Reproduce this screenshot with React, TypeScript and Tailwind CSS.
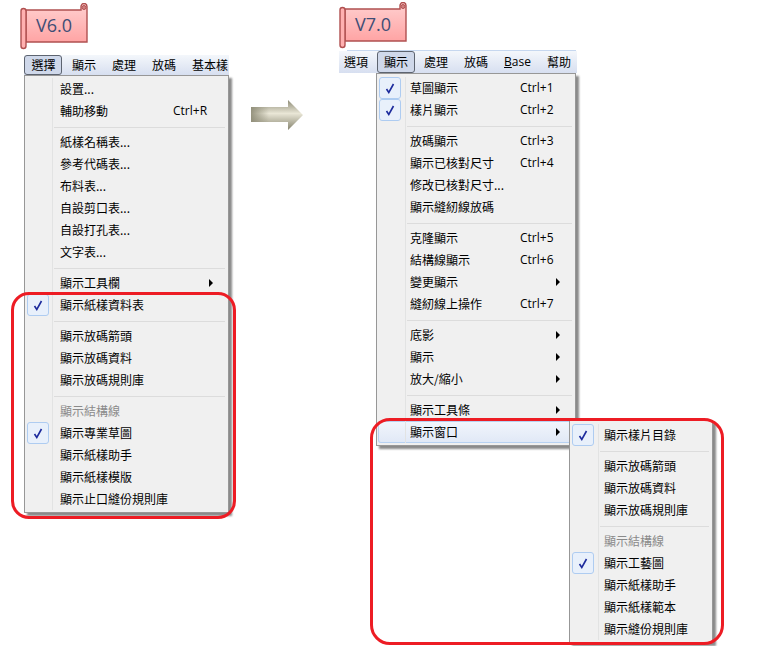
import React from 'react';

type Row = {
  label?: string;
  shortcut?: string;
  checked?: boolean;
  arrow?: boolean;
  disabled?: boolean;
  active?: boolean;
  sep?: boolean;
};

const font = { fontFamily: '"Noto Sans CJK TC", "Noto Sans", sans-serif' };

const v6Rows: Row[] = [
  { label: '設置...' },
  { label: '輔助移動', shortcut: 'Ctrl+R' },
  { sep: true },
  { label: '紙樣名稱表...' },
  { label: '參考代碼表...' },
  { label: '布料表...' },
  { label: '自設剪口表...' },
  { label: '自設打孔表...' },
  { label: '文字表...' },
  { sep: true },
  { label: '顯示工具欄', arrow: true },
  { label: '顯示紙樣資料表', checked: true },
  { sep: true },
  { label: '顯示放碼箭頭' },
  { label: '顯示放碼資料' },
  { label: '顯示放碼規則庫' },
  { sep: true },
  { label: '顯示結構線', disabled: true },
  { label: '顯示專業草圖', checked: true },
  { label: '顯示紙樣助手' },
  { label: '顯示紙樣模版' },
  { label: '顯示止口縫份規則庫' },
];

const v7Rows: Row[] = [
  { label: '草圖顯示', shortcut: 'Ctrl+1', checked: true },
  { label: '樣片顯示', shortcut: 'Ctrl+2', checked: true },
  { sep: true },
  { label: '放碼顯示', shortcut: 'Ctrl+3' },
  { label: '顯示已核對尺寸', shortcut: 'Ctrl+4' },
  { label: '修改已核對尺寸...' },
  { label: '顯示縫紉線放碼' },
  { sep: true },
  { label: '克隆顯示', shortcut: 'Ctrl+5' },
  { label: '結構線顯示', shortcut: 'Ctrl+6' },
  { label: '變更顯示', arrow: true },
  { label: '縫紉線上操作', shortcut: 'Ctrl+7' },
  { sep: true },
  { label: '底影', arrow: true },
  { label: '顯示', arrow: true },
  { label: '放大/縮小', arrow: true },
  { sep: true },
  { label: '顯示工具條', arrow: true },
  { label: '顯示窗口', arrow: true, active: true },
];

const v7Sub: Row[] = [
  { label: '顯示樣片目錄', checked: true },
  { sep: true },
  { label: '顯示放碼箭頭' },
  { label: '顯示放碼資料' },
  { label: '顯示放碼規則庫' },
  { sep: true },
  { label: '顯示結構線', disabled: true },
  { label: '顯示工藝圖', checked: true },
  { label: '顯示紙樣助手' },
  { label: '顯示紙樣範本' },
  { label: '顯示縫份規則庫' },
];

function Banner({ text, id }: { text: string; id: string }) {
  return (
    <div className="relative h-[45px] w-[68px]">
      <svg width="68" height="47" viewBox="0 0 68 47" className="block">
        <defs>
          <linearGradient id={id} x1="0" y1="0" x2="0" y2="1">
            <stop offset="0" stopColor="#ffd0d0" />
            <stop offset="1" stopColor="#ffa4a4" />
          </linearGradient>
        </defs>
        <path d="M3 7 H61 V3.5 A3 3 0 0 1 67 3.5 V39 H6 V7 Z" fill={`url(#${id})`} stroke="#b05050" strokeWidth="1.4" />
        <path d="M1 8 A2.5 2.5 0 0 1 6 8 V43 A2.5 2.5 0 0 1 1 43 Z" fill="#ffb0b0" stroke="#b05050" strokeWidth="1.4" />
        <circle cx="64" cy="4.5" r="2" fill="#d08080" stroke="#b05050" strokeWidth="1" />
      </svg>
      <span
        className="absolute left-0 right-0 top-[9px] text-center text-[18px] leading-[26px] text-[#3f4d75]"
        style={{ fontFamily: '"Open Sans", sans-serif' }}
      >
        {text}
      </span>
    </div>
  );
}

function Check() {
  return (
    <span className="flex h-[22px] w-[22px] items-center justify-center rounded-[3px] border border-[#aeccf1] bg-[#e8f0fb]">
      <svg width="10" height="11" viewBox="0 0 10 11">
        <path d="M1.5 6 L3.8 9.5 L8.5 1" fill="none" stroke="#1c2a9c" strokeWidth="1.6" />
      </svg>
    </span>
  );
}

function MenuRows({ rows, gutter, text }: { rows: Row[]; gutter: string; text: string }) {
  return (
    <>
      {rows.map((row, i) =>
        row.sep ? (
          <div key={i} className="flex h-[9px]">
            <div className={`${gutter} shrink-0 border-r border-[#e2e3e3]`} />
            <div className="flex flex-1 items-center pl-[1px] pr-[3px] pt-[2px]">
              <div className="h-px w-full bg-[#dcdcdc]" />
            </div>
          </div>
        ) : (
          <div
            key={i}
            className={`flex h-[22px] items-center ${
              row.active
                ? 'rounded-[3px] bg-gradient-to-b from-[#f2f6fc] to-[#e0e8f6] shadow-[inset_0_0_0_1px_#b8d2f2]'
                : ''
            }`}
          >
            <div className={`flex h-full ${gutter} shrink-0 items-center justify-center border-r border-[#e2e3e3] pr-[3px]`}>
              {row.checked && <Check />}
            </div>
            <span className={`${text} text-[12px] leading-none ${row.disabled ? 'text-[#8a8a8a]' : 'text-black'}`}>
              {row.label}
            </span>
            {row.shortcut && (
              <span
                className="ml-auto w-[55px] text-[12px] leading-none text-black"
                style={{ fontFamily: '"Open Sans", sans-serif' }}
              >
                {row.shortcut}
              </span>
            )}
            {row.arrow && (
              <span className="ml-auto mr-[15px] h-0 w-0 border-y-[4px] border-l-[4px] border-y-transparent border-l-black" />
            )}
          </div>
        ),
      )}
    </>
  );
}

export default function App() {
  return (
    <div className="relative flex h-[646px] w-[765px] overflow-hidden bg-white" style={font}>
      {/* V6.0 */}
      <div className="ml-[20px] w-[209px] shrink-0 pt-[3px]">
        <Banner text="V6.0" id="bannerLeft" />
        <div className="ml-[4px] mt-[7px] flex h-[20px] w-[205px] items-center bg-gradient-to-b from-[#f4f7fb] to-[#d7dff0] text-[12px] text-black">
          <span className="flex h-[20px] w-[38px] items-center justify-center rounded-[3px] border border-[#5d6470] bg-[#cfd8ea] pl-[1px]">選擇</span>
          <span className="ml-[10px]">顯示</span>
          <span className="ml-[16px]">處理</span>
          <span className="ml-[16px]">放碼</span>
          <span className="ml-[16px] whitespace-nowrap">基本樣</span>
        </div>
        <div className="ml-[4px] w-[205px] border border-[#979797] bg-[#f0f0f0] py-[2px] pl-[1px] shadow-[3px_3px_2px_#8a8a8a]">
          <MenuRows rows={v6Rows} gutter="w-[27px]" text="pl-[7px]" />
        </div>
      </div>

      {/* arrow between the versions */}
      <div className="ml-[22px] mt-[100px] shrink-0">
        <svg width="52" height="30" viewBox="0 0 52 30" className="block">
          <defs>
            <linearGradient id="arrowFill" x1="0" y1="0" x2="0" y2="1">
              <stop offset="0" stopColor="#8d8b76" />
              <stop offset="0.45" stopColor="#e9e6d6" />
              <stop offset="1" stopColor="#85836e" />
            </linearGradient>
            <linearGradient id="arrowSide" x1="0" y1="0" x2="1" y2="0">
              <stop offset="0" stopColor="#8d8b76" stopOpacity="0.9" />
              <stop offset="0.6" stopColor="#8d8b76" stopOpacity="0" />
            </linearGradient>
          </defs>
          <path d="M0 7 H37 V0 L52 15 L37 30 V22 H0 Z" fill="url(#arrowFill)" />
          <path d="M0 7 H30 V22 H0 Z" fill="url(#arrowSide)" />
        </svg>
      </div>

      {/* V7.0 */}
      <div className="relative ml-[36px] w-[238px] shrink-0 pt-[2px]">
        <Banner text="V7.0" id="bannerRight" />
        <div className="ml-[8px] mt-[3px] h-px w-[229px] bg-[#c6d7ef]" />
        <div className="flex h-[22px] items-center bg-gradient-to-b from-[#f4f7fb] to-[#d7dff0] pl-[5px] text-[12px] text-black">
          <span>選項</span>
          <span className="ml-[9px] flex h-[22px] w-[38px] items-center justify-center rounded-[3px] border border-[#5d6470] bg-[#cfd8ea]">顯示</span>
          <span className="ml-[9px]">處理</span>
          <span className="ml-[16px]">放碼</span>
          <span className="ml-[16px]" style={{ fontFamily: '"Open Sans", sans-serif' }}>
            <span className="underline">B</span>ase
          </span>
          <span className="ml-[16px]">幫助</span>
        </div>
        <div className="ml-[37px] w-[200px] border border-[#979797] bg-[#f0f0f0] pb-[2px] pl-[1px] pt-[3px] shadow-[3px_3px_2px_#8a8a8a]">
          <MenuRows rows={v7Rows} gutter="w-[28px]" text="pl-[4px]" />
        </div>

        {/* submenu */}
        <div className="absolute left-[230px] top-[420px] w-[144px] border border-[#979797] bg-[#f0f0f0] pb-[2px] pl-[1px] pt-[3px] shadow-[3px_3px_2px_#8a8a8a]">
          <MenuRows rows={v7Sub} gutter="w-[28px]" text="pl-[5px]" />
        </div>
      </div>

      {/* red callouts */}
      <div className="pointer-events-none absolute left-[11px] top-[292px] h-[227px] w-[225px] rounded-[18px] border-[3px] border-[#ed1c24]" />
      <div className="pointer-events-none absolute left-[370px] top-[418px] h-[227px] w-[354px] rounded-[20px] border-[3px] border-[#ed1c24]" />
    </div>
  );
}
